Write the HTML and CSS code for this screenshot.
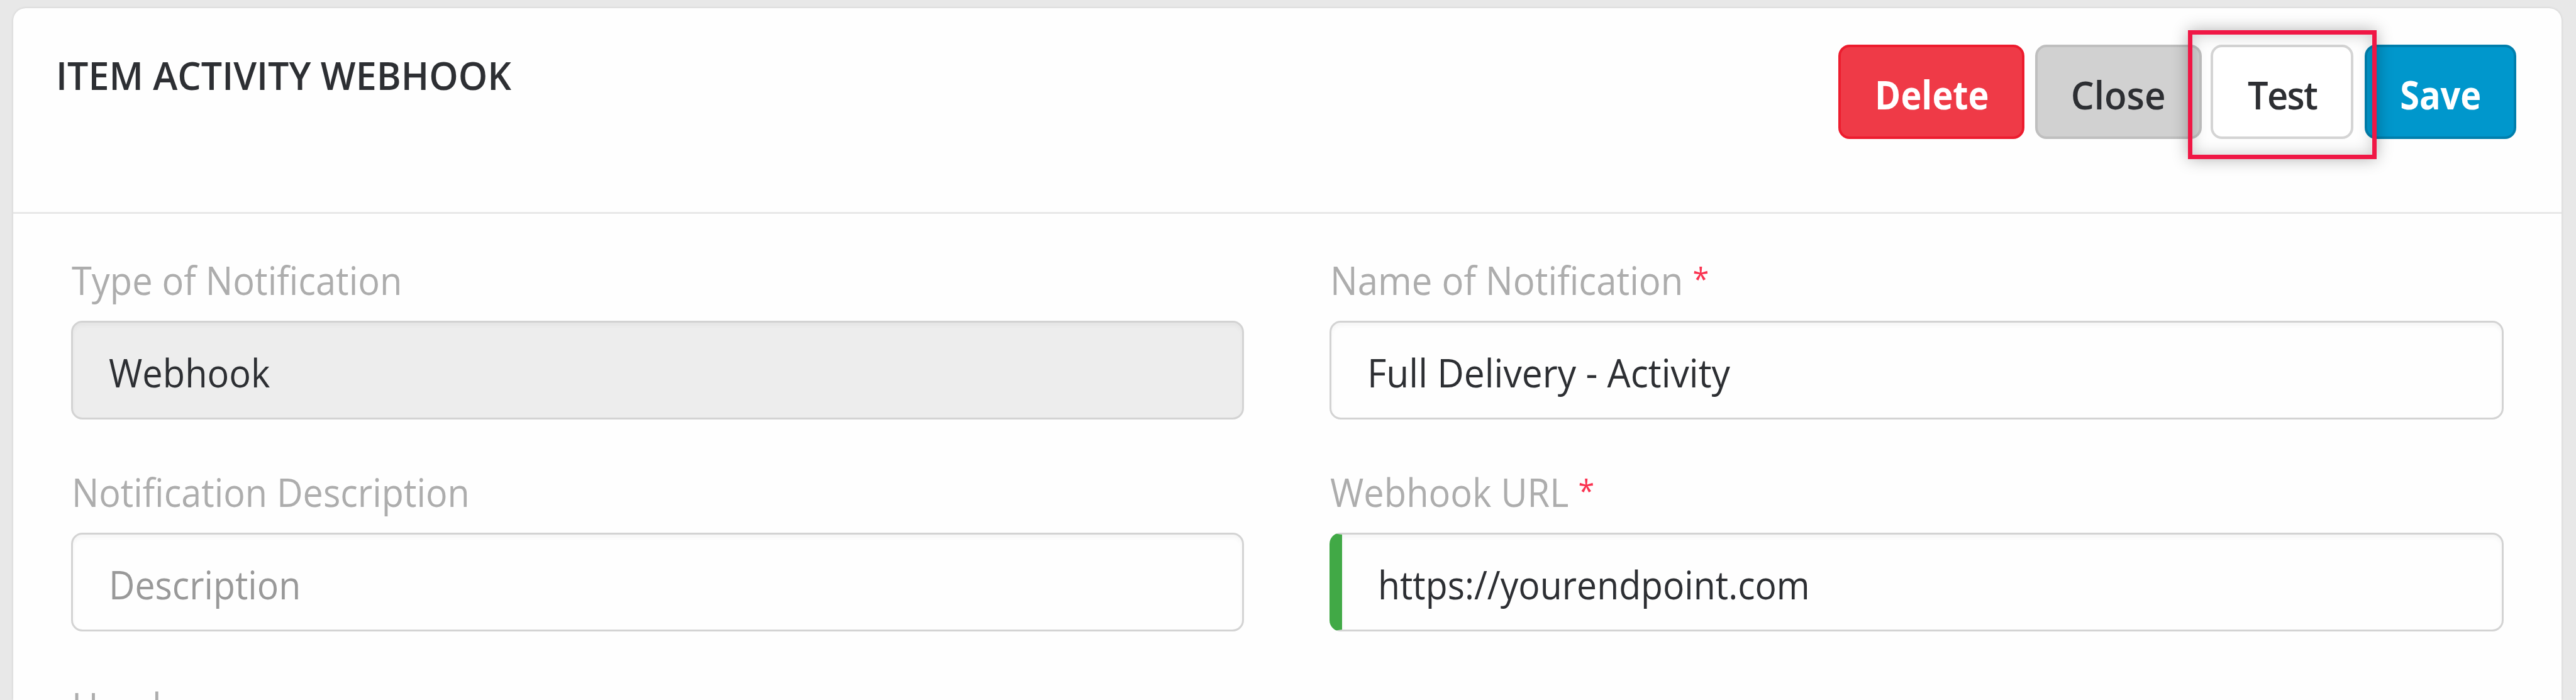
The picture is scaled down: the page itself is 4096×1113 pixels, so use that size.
FILE: index.html
```html
<!DOCTYPE html>
<html lang="en">
<head>
<meta charset="utf-8">
<title>Item Activity Webhook</title>
<link rel="stylesheet" href="styles.css">
</head>
<body>
<main class="panel">
  <header class="panel-header">
    <h1 class="title"><span class="text">ITEM ACTIVITY WEBHOOK</span></h1>
    <div class="actions">
      <button class="btn btn-delete"><span class="text">Delete</span></button>
      <button class="btn btn-close"><span class="text">Close</span></button>
      <div class="marked">
        <button class="btn btn-test"><span class="text">Test</span></button>
        <div class="marker"></div>
      </div>
      <button class="btn btn-save"><span class="text">Save</span></button>
    </div>
  </header>
  <form class="form">
    <div class="field">
      <div class="label"><span class="text">Type of Notification</span></div>
      <div class="input input-disabled"><span class="text">Webhook</span></div>
    </div>
    <div class="field">
      <div class="label"><span class="text label-name">Name of Notification <span class="star">*</span></span></div>
      <div class="input"><span class="text value-name">Full Delivery - Activity</span></div>
    </div>
    <div class="field">
      <div class="label"><span class="text label-description">Notification Description</span></div>
      <div class="input"><span class="text placeholder">Description</span></div>
    </div>
    <div class="field">
      <div class="label"><span class="text">Webhook URL <span class="star">*</span></span></div>
      <div class="input input-valid"><span class="text value-url">https://yourendpoint.com</span></div>
    </div>
    <div class="field field-headers">
      <div class="label"><span class="text">Headers</span></div>
    </div>
  </form>
</main>
</body>
</html>
```
FILE: styles.css
```css
* { box-sizing: border-box; }

body {
  margin: 0;
  height: 1113px;
  overflow: hidden;
  padding: 13px 23.5px 0 20.5px;
  background: #e8e8e8;
  font: 400 62px/84px "Open Sans", "Noto Sans", sans-serif;
  color: #2d2f33;
}

.text {
  display: inline-block;
  white-space: pre;
  transform: scaleX(.932);
  transform-origin: left;
}

.panel {
  height: 1100px;
  overflow: hidden;
  background: #fefefe;
  border-radius: 20px 20px 0 0;
  box-shadow: 0 0 4px rgba(0, 0, 0, .12);
}

.panel-header {
  display: flex;
  justify-content: space-between;
  align-items: flex-start;
  height: 327px;
  padding: 58px 72px 0 68.5px;
  border-bottom: 3px solid #e8e8e8;
}

.title {
  margin: 6px 0 0;
  font-size: 62px;
  font-weight: 600;
}
.title .text { transform: scaleX(.9535); }

.actions { display: flex; }

.btn {
  display: block;
  height: 150px;
  padding: 7px 0 0;
  border: 4px solid;
  border-radius: 18px;
  font: inherit;
  font-weight: 600;
  color: #2d2f33;
  text-align: center;
}
.btn .text { transform-origin: center; }

.btn-delete {
  width: 296px;
  margin-right: 17px;
  padding-left: 2px;
  background: #ef3a47;
  border-color: #ed1c2e;
  color: #fff;
  font-weight: 700;
}
.btn-delete .text { transform: scaleX(.9); }
.btn-close {
  width: 265px;
  margin-right: 14px;
  background: #d1d1d1;
  border-color: #bfbfbf;
}
.btn-close .text { transform: scaleX(.94); }
.btn-test {
  width: 227px;
  padding-left: 2px;
  background: #fff;
  border-color: #d4d4d4;
}
.btn-test .text { letter-spacing: -1.8px; }
.btn-save {
  width: 241px;
  padding-left: 2px;
  background: #0097cc;
  border-color: #007fad;
  color: #fff;
  font-weight: 700;
}
.btn-save .text { transform: scaleX(.9); }

.marked {
  position: relative;
  margin-right: 18px;
}
.marker {
  position: absolute;
  left: -36px;
  top: -23px;
  width: 300px;
  height: 205px;
  border: 7px solid #f01745;
  box-shadow: 0 0 24px rgba(0, 0, 0, .3), inset 0 0 24px rgba(0, 0, 0, .2);
}

.form {
  display: grid;
  grid-template-columns: 1865px 1867px;
  column-gap: 136px;
  row-gap: 73px;
  padding: 63px 0 0 92.5px;
}

.label {
  margin-bottom: 23px;
  padding-left: 1px;
  color: #adadad;
}
.label-name { transform: scaleX(.937); }
.label-description { transform: scaleX(.927); }
.field-headers { padding-top: 4px; }

.star {
  font-size: 50px;
  line-height: 0;
  vertical-align: 7px;
  color: #fa3250;
}

.input {
  height: 157px;
  padding: 37px 56.5px 0;
  border: 3.5px solid #d3d3d3;
  border-radius: 18px;
  background: #fefefe;
  box-shadow: inset 0 5px 6px rgba(0, 0, 0, .035);
}
.input-disabled { background: #ededed; }
.input-valid { border-left: 20px solid #41a946; }
.value-name { transform: scaleX(.947); }
.value-url { transform: scaleX(.921); }
.placeholder {
  transform: scaleX(.922);
  color: #999;
}
```
